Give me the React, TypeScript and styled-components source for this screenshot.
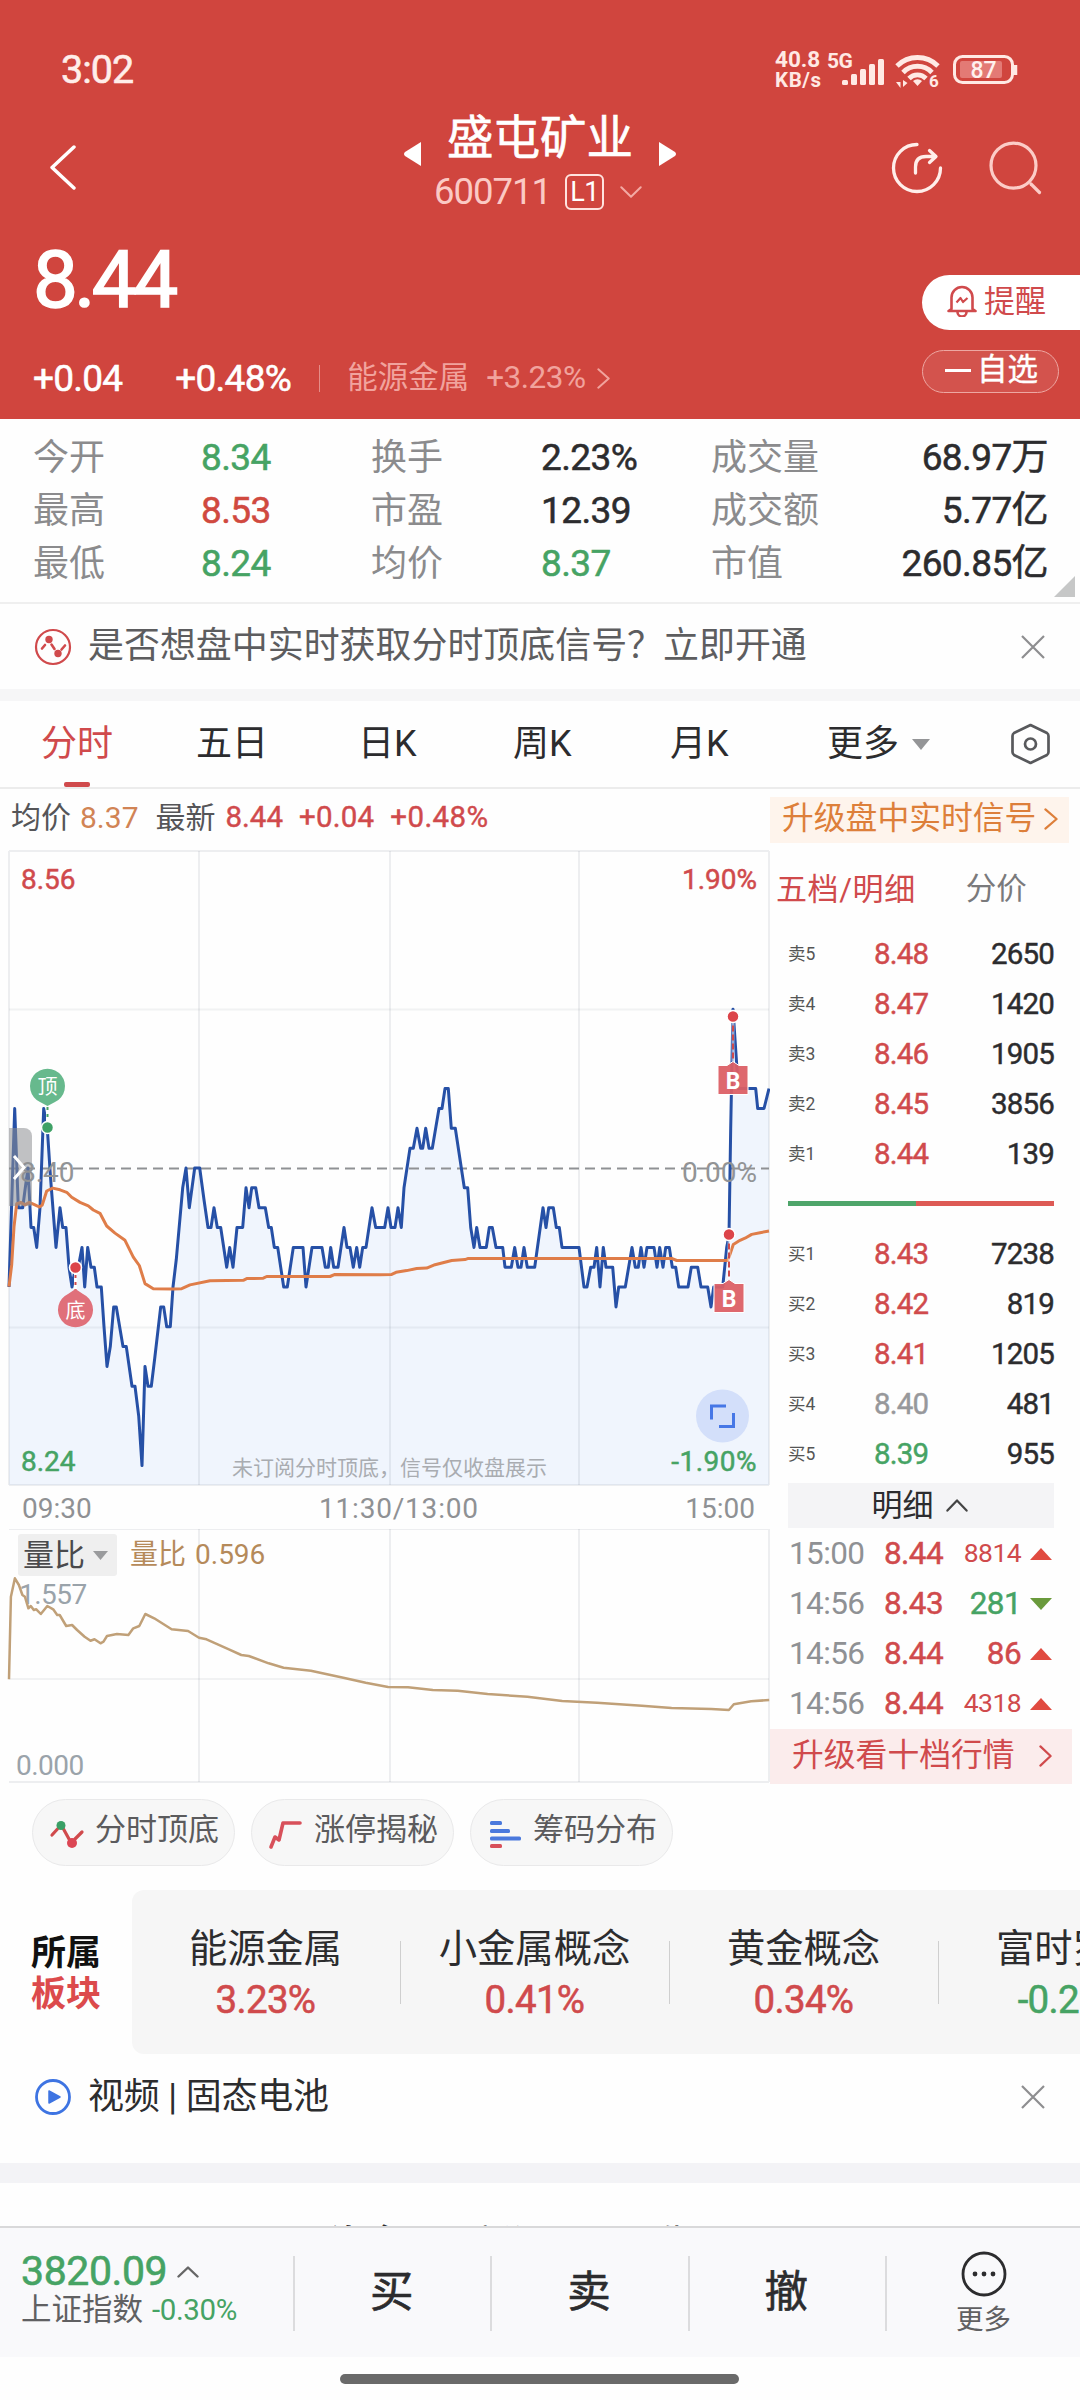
import React from 'react';
import styled, { createGlobalStyle } from 'styled-components';

const RED = '#d04a4c';
const GREEN = '#46a364';
const INK = '#2c2c2e';
const GREY = '#8b8b8d';
const HEADER = '#d0453e';

const Global = createGlobalStyle`
  * { box-sizing: border-box; }
  html, body { margin: 0; padding: 0; }
  body {
    width: 1080px; height: 2400px; overflow: hidden; background: #fefefe;
    font-family: Roboto, "Noto Sans CJK SC", sans-serif;
  }
`;

/* Weight 500 is drawn as regular glyphs with a thin outline: lighter than the Medium cut */
type TProps = { $s: number; $c?: string; $w?: number; $ls?: number };
const T = styled.span<TProps>`
  display: block;
  line-height: 1;
  white-space: nowrap;
  font-size: ${p => p.$s}px;
  color: ${p => p.$c ?? INK};
  font-weight: ${p => (p.$w === 500 ? 400 : p.$w ?? 400)};
  -webkit-text-stroke: ${p => (p.$w === 500 ? (p.$s > 60 ? 1.6 : p.$s / 70) : 0)}px currentColor;
  letter-spacing: ${p => p.$ls ?? 0}px;
`;

const Page = styled.div`
  width: 1080px; height: 2400px; overflow: hidden;
  display: flex; flex-direction: column;
`;

/* header */
const Header = styled.header`
  height: 419px; background: ${HEADER}; color: #fff;
  display: flex; flex-direction: column; flex: none;
`;
const StatusBar = styled.div`
  height: 112px; padding: 28px 60px 0 61px;
  display: flex; align-items: center; justify-content: space-between;
`;
const StatusIcons = styled.div`display: flex; align-items: center;`;
const NetSpeed = styled.div`display: flex; flex-direction: column; width: 50px; margin-top: -2px;`;
const TitleBar = styled.div`
  height: 110px; padding: 0 37px 0 50px;
  display: grid; grid-template-columns: 148px 1fr 150px; align-items: start;
`;
const BackBox = styled.div`padding-top: 33px; height: 80px;`;
const TitleBlock = styled.div`
  display: flex; flex-direction: column; align-items: center; gap: 12px;
`;
const NameRow = styled.div`display: flex; align-items: center; gap: 26px; height: 53px; margin-left: -11px;`;
const Arrow = styled.svg`margin-top: 30px;`;
const CodeRow = styled.div`display: flex; align-items: center; height: 36px; margin: -3px 0 0 -15px;`;
const LevelTag = styled.div`
  width: 39px; height: 36px; border: 2px solid #ffe3df; border-radius: 6px; margin: 0 16px 0 14px;
  display: flex; align-items: center; justify-content: center;
`;
const TitleActions = styled.div`display: flex; gap: 45px; padding-top: 29px; margin-left: -3px;`;
const PriceArea = styled.div`display: flex; justify-content: space-between; flex: 1;`;
const PriceLeft = styled.div`padding: 18px 0 0 33px; display: flex; flex-direction: column; gap: 33px;`;
const ChangeRow = styled.div`display: flex; align-items: center; height: 50px;`;
const VLine = styled.i`width: 1px; height: 27px; background: #e58d88; margin: 0 27px 0 28px;`;
const PriceRight = styled.div`padding-top: 53px; display: flex; flex-direction: column; gap: 20px; width: 158px;`;
const RemindPill = styled.div`
  height: 55px; border-radius: 28px 0 0 28px; background: #fff; padding: 0 0 3px 25px;
  display: flex; align-items: center; gap: 7px;
`;
const SelfPill = styled.div`
  width: 137px; height: 43px; border-radius: 22px; border: 1.5px solid #eda7a2; background: rgba(255,255,255,.08);
  display: flex; align-items: center; padding: 0 0 3px 22px; gap: 6px;
`;
const Dash = styled.i`width: 26px; height: 3px; background: #fff; margin-top: 1px;`;

/* statistics */
const Stats = styled.section`
  height: 185px; flex: none; padding: 12px 32px 0 33px; position: relative;
  border-bottom: 2px solid #efefef;
  display: grid; grid-template-columns: 168px 170px 170px 170px 110px 1fr; grid-auto-rows: 53px; align-items: center;
`;
const StatValue = styled(T)<{ $right?: boolean }>`text-align: ${p => (p.$right ? 'right' : 'left')};`;
const Corner = styled.i`
  position: absolute; right: 5px; bottom: 5px; width: 0; height: 0;
  border-left: 21px solid transparent; border-bottom: 21px solid #c6c7c7;
`;

const Notice = styled.section<{ $h: number; $pb?: number }>`
  height: ${p => p.$h}px; flex: none; padding: 0 34px ${p => p.$pb ?? 0}px 34px;
  display: flex; align-items: center; gap: 16px;
`;
const Spacer = styled.div`flex: 1;`;
const Band = styled.div<{ $h: number; $c: string }>`height: ${p => p.$h}px; background: ${p => p.$c}; flex: none;`;

/* tabs */
const Tabs = styled.nav`
  height: 88px; flex: none; padding: 0 29px 0 41px; border-bottom: 2px solid #ececec;
  display: grid; grid-template-columns: 155px 162px 155px 157px 157px 1fr 41px; align-items: stretch;
`;
const Tab = styled.div<{ $on?: boolean }>`
  display: flex; align-items: center; gap: 13px; position: relative;
  &::after {
    content: ''; display: ${p => (p.$on ? 'block' : 'none')};
    position: absolute; left: 23px; bottom: 0; width: 26px; height: 5px; border-radius: 2px; background: ${RED};
  }
`;

const InfoRow = styled.div`
  height: 61px; flex: none; padding: 0 11px 0 11px; display: flex; align-items: center;
`;
const Upgrade = styled.div`
  width: 299px; height: 46px; background: #fef4ec; display: flex; align-items: center; padding: 0 11px 1px 12px; gap: 8px;
`;
const InfoTexts = styled.div`display: flex; align-items: center; flex: 1; margin-top: -4px;`;

/* main area */
const Main = styled.div`display: flex; height: 934px; flex: none;`;
const Charts = styled.div`width: 770px; flex: none; display: flex; flex-direction: column;`;
const Axis = styled.div`
  height: 42px; padding: 1px 15px 0 22px; display: grid; grid-template-columns: 297px 1fr 100px; align-items: center;
`;
const AxisLabel = styled(T)<{ $end?: boolean }>`text-align: ${p => (p.$end ? 'right' : 'left')};`;
const Volume = styled.div`position: relative; height: 255px;`;
const VolHead = styled.div`position: absolute; left: 18px; top: 5px; display: flex; align-items: center;`;
const VolPick = styled.div`
  width: 99px; height: 42px; background: #efefef; border-radius: 3px; display: flex; align-items: center;
  padding-left: 5px; gap: 8px; margin-right: 13px;
`;

const Side = styled.aside`flex: 1; display: flex; flex-direction: column;`;
const SideTabs = styled.div`
  height: 79px; display: flex; align-items: center; padding-left: 6px; gap: 50px;
`;
const BookRow = styled.div`
  height: 50px; margin: 0 26px 0 18px; padding-top: 2px;
  display: grid; grid-template-columns: 86px 1fr 90px; align-items: center;
`;
const RatioRow = styled.div`height: 50px; margin: 0 26px 0 18px; padding-bottom: 2px; display: flex; align-items: center;`;
const Ratio = styled.i<{ $c: string; $flex: number }>`height: 5px; background: ${p => p.$c}; flex: ${p => p.$flex};`;
const DetailBar = styled.div`
  height: 45px; margin: 4px 26px 0 18px; background: #f4f4f6; display: flex; align-items: center; gap: 12px;
  justify-content: center; padding-right: 3px;
`;
const TradeRow = styled.div`
  height: 50px; margin: 0 28px 0 19px; padding-top: 1px;
  display: grid; grid-template-columns: 95px 1fr 74px 22px; align-items: center;
`;
const TradeNum = styled(T)`text-align: right; padding-right: 9px;`;
const TenLevel = styled.div`
  height: 55px; width: 302px; margin-top: auto; background: #fbecec; display: flex; align-items: center;
  justify-content: space-between; padding: 0 20px 2px 22px;
`;

/* chips and sectors */
const Chips = styled.div`height: 106px; flex: none; padding: 15px 32px 0; display: flex; gap: 16px;`;
const Chip = styled.div`
  width: 203px; height: 67px; border-radius: 34px; background: #f7f7f7; border: 1.5px solid #e9e9ea;
  display: flex; align-items: center; gap: 10px; padding: 0 0 6px 16px;
`;
const Sectors = styled.section`height: 164px; flex: none; display: flex;`;
const SectorTitle = styled.div`
  width: 132px; padding: 3px 0 0 31px; display: flex; flex-direction: column; justify-content: center; gap: 6px;
`;
const SectorList = styled.div`
  flex: none; width: 948px; background: #f6f6f6; border-radius: 12px 0 0 12px; display: flex; overflow: hidden;
`;
const Sector = styled.div`
  width: 269px; flex: none; display: flex; flex-direction: column; align-items: center; gap: 13px;
  padding: 40px 2px 0 0;
  background: linear-gradient(#cfcfcf, #cfcfcf) right 51px / 1px 63px no-repeat;
`;

/* bottom */
const Peek = styled.div`
  height: 43px; flex: none; overflow: hidden; padding: 43px 0 0 330px; display: flex; gap: 74px;
`;
const BottomBar = styled.footer`
  height: 131px; flex: none; background: #f9f9fb; border-top: 2px solid #d9d9da; display: flex;
`;
const IndexBox = styled.div`
  width: 293px; padding: 21px 0 0 21px; display: flex; flex-direction: column; flex: none;
`;
const IndexLine = styled.div<{ $gap: number; $h: number }>`
  display: flex; align-items: center; gap: ${p => p.$gap}px; height: ${p => p.$h}px;
`;
const Action = styled.div`
  width: 197.3px; display: flex; align-items: center; justify-content: center; flex: none;
  background: linear-gradient(#dcdcde, #dcdcde) left 28px / 2px 75px no-repeat;
`;
const MoreAction = styled(Action)`flex-direction: column; gap: 9px; padding-top: 0;`;
const HomeArea = styled.div`flex: 1; display: flex; justify-content: center; padding-top: 17px;`;
const HomeBar = styled.i`width: 399px; height: 10px; border-radius: 5px; background: #6a6a6a; margin-right: 2px;`;

const Chevron = ({ dir, w, h, c, sw = 2.5 }: { dir: 'l' | 'r' | 'u' | 'd'; w: number; h: number; c: string; sw?: number }) => {
  const k = sw / 2 + 0.3;
  const pts = {
    l: `${w - k},${k} ${k},${h / 2} ${w - k},${h - k}`,
    r: `${k},${k} ${w - k},${h / 2} ${k},${h - k}`,
    u: `${k},${h - k} ${w / 2},${k} ${w - k},${h - k}`,
    d: `${k},${k} ${w / 2},${h - k} ${w - k},${k}`,
  }[dir];
  return (
    <svg width={w} height={h} style={{ display: 'block', flex: 'none' }}>
      <polyline points={pts} fill="none" stroke={c} strokeWidth={sw} strokeLinecap="round" strokeLinejoin="round" />
    </svg>
  );
};

const Close = () => (
  <svg width="26" height="26" viewBox="0 0 26 26">
    <path d="M2 2L24 24M24 2L2 24" stroke="#8e8e90" strokeWidth="2.2" fill="none" />
  </svg>
);

const Tri = ({ up, w, h, c }: { up?: boolean; w: number; h: number; c: string }) => (
  <svg width={w} height={h} style={{ display: 'block' }}>
    <polygon points={up ? `0,${h} ${w / 2},0 ${w},${h}` : `0,0 ${w},0 ${w / 2},${h}`} fill={c} />
  </svg>
);

/* ---- intraday series: [x, price level in cents above 8.00] ---- */
const A: [number, number][] = [
  [27, 34], [44, 43], [55, 38], [68, 38], [76, 39], [84, 40], [93, 37], [101, 37], [110, 36], [120, 38], [131, 43],
  [142, 42], [152, 39.4], [168, 36], [180, 38], [188, 37], [198, 37], [207, 35], [216, 34], [226, 35], [235, 35],
  [246, 36], [254, 34], [263, 36], [273, 35], [283, 35], [291, 34], [304, 34], [312, 32], [321, 30], [331, 31],
  [341, 33], [349, 33], [369, 31], [379, 31], [396, 29], [405, 29], [416, 27.5], [426, 25], [435, 30], [444, 29],
  [454, 29], [464, 30.4], [482, 33], [491, 33], [500, 32], [511, 32], [519, 34], [529, 35.4], [548, 39], [558, 40],
  [568, 38], [584, 40], [599, 40], [612, 38.4], [624, 37], [633, 37], [642, 38], [652, 37], [662, 37], [680, 35],
  [689, 36], [699, 35], [711, 37], [728, 37], [738, 39], [747, 38], [755, 39], [767, 39], [777, 38], [796, 38],
  [806, 37], [814, 37], [823, 36], [833, 36], [851, 34], [862, 34], [880, 36], [909, 36], [918, 34], [936, 36],
  [966, 36], [976, 35], [985, 35], [992, 36], [1001, 35], [1014, 35], [1032, 37], [1041, 36], [1050, 36], [1060, 35],
  [1070, 36], [1079, 35], [1088, 36], [1098, 36], [1116, 38], [1127, 37], [1154, 37],
];
const B: [number, number][] = [
  [24, 38], [33, 37], [45, 37], [54, 38], [64, 37], [72, 39], [90, 41], [100, 41], [111, 42], [122, 41], [128, 41],
  [137, 42], [147, 41], [157, 41], [177, 43], [186, 43], [195, 44], [205, 44], [214, 42], [226, 42], [253, 39],
  [263, 39], [272, 37], [282, 36], [290, 37], [300, 36], [319, 36], [328, 37], [337, 37], [348, 36], [368, 36],
  [375, 35], [394, 35], [404, 36], [414, 35], [423, 35], [432, 36], [442, 35], [464, 35], [489, 38], [498, 37],
  [506, 38], [520, 38], [529, 37], [538, 37], [546, 36], [597, 36], [612, 34], [621, 34], [632, 35], [642, 35],
  [650, 36], [660, 34], [670, 36], [678, 35], [698, 35], [708, 33], [716, 34], [736, 34], [756, 36], [766, 35],
  [775, 35], [783, 36], [792, 35], [801, 36], [822, 36], [831, 35], [839, 36], [849, 35], [857, 36], [868, 36],
  [877, 35], [887, 35], [896, 34], [924, 34], [934, 35], [953, 35], [963, 34], [983, 34], [993, 33], [1001, 34],
  [1028, 34], [1040, 36], [1047, 36.6], [1052, 42], [1059, 48], [1075, 44], [1127, 44], [1133, 43], [1152, 43],
  [1167, 44],
];
const py = (v: number) => 318 + (40 - v) * 19.84;
const price = [
  ...A.map(([x, v]) => `${(x / 3).toFixed(1)},${py(v).toFixed(1)}`),
  ...B.map(([x, v]) => `${(380 + x / 3).toFixed(1)},${py(v).toFixed(1)}`),
].join(' ');

const avgA: [number, number][] = [
  [27, 1062], [35, 1010], [42, 920], [50, 865], [62, 862], [75, 868], [88, 862], [105, 868], [118, 873], [127, 868],
  [140, 835], [158, 828], [180, 832], [200, 838], [215, 850], [240, 862], [265, 870], [280, 880], [300, 888],
  [320, 918], [345, 935], [375, 952], [400, 992], [418, 1012], [435, 1055], [460, 1067], [520, 1068], [545, 1067],
  [570, 1058], [630, 1048], [730, 1047], [740, 1043], [790, 1042], [800, 1038], [990, 1038], [1005, 1033],
];
const avgB: [number, number][] = [
  [0, 1034], [35, 1033], [48, 1028], [80, 1024], [110, 1019], [140, 1018], [165, 1010], [215, 1000], [255, 998],
  [265, 995], [875, 995], [890, 1000], [1043, 1000], [1050, 985], [1060, 962], [1080, 952], [1095, 947],
  [1115, 938], [1140, 934], [1167, 930],
];
const avg = [
  ...avgA.map(([x, y]) => `${(x / 3).toFixed(1)},${(y / 2.376 - 10.4).toFixed(1)}`),
  ...avgB.map(([x, y]) => `${(380 + x / 3).toFixed(1)},${(y / 2.376 - 10.4).toFixed(1)}`),
].join(' ');

const ratioPts: [number, number][] = [
  [18, 598], [22, 350], [30, 295], [38, 315], [45, 345], [50, 350], [57, 385], [62, 378], [68, 390], [73, 388],
  [82, 402], [95, 378], [107, 388], [115, 405], [120, 405], [133, 438], [145, 435], [155, 450], [170, 470],
  [182, 482], [190, 478], [202, 490], [208, 485], [215, 468], [235, 462], [258, 465], [268, 445], [280, 438],
  [292, 402], [310, 415], [345, 448], [378, 453], [400, 473], [415, 478], [460, 508], [485, 525], [500, 528],
  [540, 550], [570, 563], [625, 572], [690, 593], [735, 608], [780, 621], [820, 622], [870, 630], [920, 632],
  [980, 642], [1060, 650], [1130, 663], [1200, 668], [1290, 677], [1350, 684], [1430, 687], [1465, 690],
  [1475, 673], [1510, 664], [1546, 660],
];
const ratio = ratioPts.map(([x, y]) => `${(x / 2.01).toFixed(1)},${(y / 3 - 48).toFixed(1)}`).join(' ');

const GridLines = ({ top, bottom, rows, edges = true }: { top: number; bottom: number; rows: number[]; edges?: boolean }) => (
  <g stroke="#5a6478" strokeOpacity=".1" strokeWidth="2" fill="none">
    <path d={`M9 ${top}H769M9 ${bottom}H769${edges ? `M9 ${top}V${bottom}` : ''}M769 ${top}V${bottom}`} />
    {[199, 390, 579].map(x => <path key={x} d={`M${x} ${top}V${bottom}`} />)}
    {rows.map(y => <path key={y} d={`M9 ${y}H769`} strokeOpacity=".08" />)}
  </g>
);

const Signal = ({ x, dot, box }: { x: number; dot: number; box: number }) => (
  <g>
    <path d={`M${x} ${dot}V${box}`} stroke="#fff" strokeWidth="3" strokeOpacity=".5" />
    <path d={`M${x} ${dot}V${box}`} stroke={RED} strokeWidth="2" strokeDasharray="6 3" />
    <circle cx={x} cy={dot} r="6" fill="#dc4449" stroke="#fff" strokeWidth="1.5" />
    <path d={`M${x - 15} ${box + 4}H${x - 6}L${x} ${box}L${x + 6} ${box + 4}H${x + 15}V${box + 33}H${x - 15}Z`}
      fill="#dc5f65" fillOpacity=".94" stroke="#fff" strokeWidth="1" />
    <text x={x} y={box + 27} fontSize="23" fontWeight="700" fill="#fff" textAnchor="middle">B</text>
  </g>
);

const PriceChart = () => (
  <svg width="770" height="637" style={{ display: 'block' }}>
    <polygon points={`9,635 ${price} 769,635`} fill="#f0f5fd" />
    <GridLines top={1} bottom={635} rows={[159.5, 477.5]} />
    <path d="M9 318.5H769" stroke="#8f9194" strokeWidth="2" strokeDasharray="10 6" />
    <polyline points={price} fill="none" stroke="#2650a6" strokeWidth="3" strokeLinejoin="round" />
    <polyline points={avg} fill="none" stroke="#df7d49" strokeWidth="3" strokeLinejoin="round" />
    <g fontSize="28" strokeWidth=".5">
      <text x="21" y="39" fill={RED} stroke={RED}>8.56</text>
      <text x="757" y="39" fill={RED} stroke={RED} textAnchor="end">1.90%</text>
      <text x="20" y="332" fill="#929496">8.40</text>
      <text x="757" y="332" fill="#929496" textAnchor="end">0.00%</text>
      <text x="21" y="621" fill={GREEN} stroke={GREEN}>8.24</text>
      <text x="757" y="621" fill={GREEN} stroke={GREEN} textAnchor="end" letterSpacing=".5">-1.90%</text>
    </g>
    <text x="232" y="624.5" fontSize="21" fill="#a9acb1">未订阅分时顶底，信号仅收盘展示</text>
    <path d="M9 278H24A8 8 0 0 1 32 286V356H9Z" fill="#8c8e92" fillOpacity=".55" />
    <polyline points="14,306 24,317.500 14,329" fill="none" stroke="#fff" strokeWidth="3" />
    <g>
      <path d="M47.500 257V277" stroke="#fff" strokeWidth="3" />
      <path d="M47.500 257V277" stroke={GREEN} strokeWidth="2" strokeDasharray="3 4" />
      <circle cx="47.500" cy="277.500" r="6" fill="#3fa166" stroke="#fff" strokeWidth="1.500" />
      <path d="M40 252L47.500 256L55 252A17.500 17.500 0 1 0 40 252Z" fill="#67b98d" />
      <text x="47.500" y="243.500" fontSize="20" fill="#fff" textAnchor="middle">顶</text>
    </g>
    <g>
      <path d="M75.500 418V441" stroke="#fff" strokeWidth="3" />
      <path d="M75.500 418V441" stroke={RED} strokeWidth="2" strokeDasharray="3 4" />
      <circle cx="75.500" cy="417.5" r="6" fill="#dc4449" stroke="#fff" strokeWidth="1.500" />
      <path d="M68 444L75.500 439L83 444A17.500 17.500 0 1 1 68 444Z" fill="#e0707a" />
      <text x="75.500" y="467.500" fontSize="20" fill="#fff" textAnchor="middle">底</text>
    </g>
    <Signal x={733} dot={166.5} box={211.5} />
    <Signal x={729} dot={384.5} box={429.5} />
    <circle cx="722.500" cy="566" r="26.500" fill="#d3dffa" />
    <path d="M711.500 569.500V556H726M733.500 563V576.500H719" fill="none" stroke="#4677e6" strokeWidth="3" />
  </svg>
);

const SignalCircle = () => (
  <svg width="38" height="38" viewBox="0 0 38 38">
    <circle cx="19" cy="19" r="17" fill="none" stroke={RED} strokeWidth="2.200" />
    <path d="M8 20.500L11 17M17.500 16.500L20.500 21M27.500 21.500L31 17.500" fill="none" stroke={RED} strokeWidth="2.600" strokeLinecap="round" />
    <circle cx="15" cy="11.500" r="3.700" fill={RED} /><circle cx="24" cy="25.500" r="3.700" fill={RED} />
  </svg>
);

const sells = [['卖5', '8.48', '2650'], ['卖4', '8.47', '1420'], ['卖3', '8.46', '1905'], ['卖2', '8.45', '3856'], ['卖1', '8.44', '139']];
const buys = [['买1', '8.43', '7238'], ['买2', '8.42', '819'], ['买3', '8.41', '1205'], ['买4', '8.40', '481', '#97989b'], ['买5', '8.39', '955', GREEN]];
const Book = ({ row }: { row: string[] }) => (
  <BookRow>
    <T $s={17.5} $c="#555">{row[0]}</T>
    <T $s={29.5} $c={row[3] ?? RED} $w={500} $ls={-0.8}>{row[1]}</T>
    <StatValue $s={29.5} $w={500} $ls={-0.8} $right>{row[2]}</StatValue>
  </BookRow>
);
const trades: [string, string, string, boolean, number][] = [
  ['15:00', '8.44', '8814', true, 26.5], ['14:56', '8.43', '281', false, 31.5],
  ['14:56', '8.44', '86', true, 31.5], ['14:56', '8.44', '4318', true, 26.5],
];
const stats: [string, string, string][] = [
  ['今开', '8.34', GREEN], ['换手', '2.23%', INK], ['成交量', '68.97万', INK],
  ['最高', '8.53', '#d0493f'], ['市盈', '12.39', INK], ['成交额', '5.77亿', INK],
  ['最低', '8.24', GREEN], ['均价', '8.37', GREEN], ['市值', '260.85亿', INK],
];
const sectors = [['能源金属', '3.23%', RED], ['小金属概念', '0.41%', RED], ['黄金概念', '0.34%', RED], ['富时罗素', '-0.22%', GREEN]];

export default function App() {
  return (
    <Page>
      <Global />
      <Header>
        <StatusBar>
          <T $s={39.5} $c="#ffeeea" $w={500} $ls={-1}>3:02</T>
          <StatusIcons>
            <NetSpeed>
              <T $s={22.5} $c="#ffe9e4" $w={700}>40.8</T>
              <T $s={20.5} $c="#ffe9e4" $w={700} $ls={0.6}>KB/s</T>
            </NetSpeed>
            <svg width="195" height="42" viewBox="0 0 195 42">
              <g fill="#ffe9e4">
                <text x="2" y="19" fontSize="21" fontWeight="700" letterSpacing="-.5">5G</text>
                <rect x="17" y="31" width="6" height="5" rx="1.500" /><rect x="26" y="25" width="6" height="11" rx="1.500" />
                <rect x="35" y="20" width="6" height="16" rx="1.500" /><rect x="44" y="15" width="6" height="21" rx="1.500" />
                <rect x="53" y="10" width="6" height="26" rx="1.500" />
                <path d="M88 32L92.500 37L97 32A7 7 0 0 0 88 32Z" />
                <text x="104" y="38" fontSize="17" fontWeight="700">6</text>
                <path d="M71 33H75.500V39ZM78 31V38L82.500 34Z" />
              </g>
              <g fill="none" stroke="#ffe9e4" strokeWidth="4.800">
                <path d="M72 17A29 29 0 0 1 113 17" /><path d="M78 23.500A20 20 0 0 1 107 23.500" />
                <path d="M84 29.500A12 12 0 0 1 101 29.500" />
              </g>
              <rect x="129.500" y="7.500" width="58" height="26" rx="8" fill="none" stroke="#ffe9e4" strokeWidth="3" />
              <rect x="135" y="12" width="42" height="17" rx="2" fill="#e37a75" />
              <path d="M190.500 16V26" stroke="#ffe9e4" strokeWidth="3.500" />
              <text x="158.500" y="28.500" fontSize="23" fontWeight="500" fill="#fff1ee" textAnchor="middle">87</text>
            </svg>
          </StatusIcons>
        </StatusBar>
        <TitleBar>
          <BackBox><Chevron dir="l" w={26} h={45} c="#fff" sw={3.5} /></BackBox>
          <TitleBlock>
            <NameRow>
              <Arrow width="17" height="24"><path d="M17 0V24L1 14Q-1 12 1 10Z" fill="#fff" /></Arrow>
              <T $s={46.5} $c="#fff" $w={500}>盛屯矿业</T>
              <Arrow width="17" height="24"><path d="M0 0V24L16 14Q18 12 16 10Z" fill="#fff" /></Arrow>
            </NameRow>
            <CodeRow>
              <T $s={36.5} $c="#fbc9c4" $ls={-1}>600711</T>
              <LevelTag><T $s={27} $c="#fff" $ls={-0.5}>L1</T></LevelTag>
              <Chevron dir="d" w={22} h={12} c="#f3aaa4" sw={2} />
            </CodeRow>
          </TitleBlock>
          <TitleActions>
            <svg width="54" height="54" viewBox="0 0 54 54" fill="none" stroke="#ffeeea" strokeWidth="3.300" strokeLinecap="round" strokeLinejoin="round">
              <path d="M27 3.500A23.500 23.500 0 1 0 50.500 27" />
              <path d="M25.500 32V26Q25.500 15.500 36 15.500H45M39.500 9.500L46 15.500L39.500 21.500" />
            </svg>
            <svg width="54" height="54" viewBox="0 0 54 54" fill="none" stroke="#fcccc7" strokeWidth="3.200" strokeLinecap="round">
              <circle cx="24.500" cy="24.600" r="22.500" /><path d="M42 43L50.500 51.500" />
            </svg>
          </TitleActions>
        </TitleBar>
        <PriceArea>
          <PriceLeft>
            <T $s={80} $c="#fff" $w={500} $ls={-3.6}>8.44</T>
            <ChangeRow>
              <T $s={37} $c="#fff" $w={500} $ls={-0.8}>+0.04</T>
              <T $s={37} $c="#fff" $w={500} $ls={-0.7} style={{ marginLeft: 53 }}>+0.48%</T>
              <VLine />
              <T $s={30.5} $c="#f1a39d">能源金属</T>
              <T $s={31.5} $c="#f1a39d" $ls={-0.5} style={{ margin: '0 11px 0 17px' }}>+3.23%</T>
              <Chevron dir="r" w={13} h={21} c="#f1a39d" sw={2} />
            </ChangeRow>
          </PriceLeft>
          <PriceRight>
            <RemindPill>
              <svg width="30" height="32" viewBox="0 0 30 32" fill="none" stroke={RED} strokeWidth="2.600" strokeLinejoin="round">
                <path d="M4.500 24V12.500A10.500 10.500 0 0 1 25.500 12.500V24L28.500 26H1.500Z" />
                <path d="M9.500 17.500L13.500 13L16 17L20.500 13" strokeWidth="2.200" />
                <path d="M10.500 27A4.500 4.500 0 0 0 19.500 27" />
              </svg>
              <T $s={31} $c={RED}>提醒</T>
            </RemindPill>
            <SelfPill><Dash /><T $s={30.5} $c="#fff" $w={500}>自选</T></SelfPill>
          </PriceRight>
        </PriceArea>
      </Header>

      <Stats>
        {stats.map(([label, value, color], i) => (
          <React.Fragment key={label}>
            <T $s={36} $c={GREY}>{label}</T>
            <StatValue $s={37} $c={color} $w={500} $ls={-0.6} $right={i % 3 === 2}>{value}</StatValue>
          </React.Fragment>
        ))}
        <Corner />
      </Stats>

      <Notice $h={85}>
        <SignalCircle />
        <T $s={35.95} $c="#5d5d5f">是否想盘中实时获取分时顶底信号？立即开通</T>
        <Spacer />
        <Close />
      </Notice>
      <Band $h={12} $c="#f6f6f7" />

      <Tabs>
        <Tab $on><T $s={36} $c={RED}>分时</T></Tab>
        <Tab><T $s={36}>五日</T></Tab>
        <Tab><T $s={36}>日K</T></Tab>
        <Tab><T $s={36}>周K</T></Tab>
        <Tab><T $s={36}>月K</T></Tab>
        <Tab><T $s={36}>更多</T><Tri w={18} h={11} c="#949597" /></Tab>
        <Tab>
          <svg width="41" height="42" viewBox="0 0 41 42" fill="none" stroke="#58595c" strokeWidth="2.700" strokeLinejoin="round">
            <path d="M20.500 2L37 10Q38.500 11 38.500 13V29Q38.500 31 37 32L20.500 40L4 32Q2.500 31 2.500 29V13Q2.500 11 4 10Z" />
            <circle cx="20.500" cy="21" r="5.500" />
          </svg>
        </Tab>
      </Tabs>

      <InfoRow>
        <InfoTexts>
          <T $s={30} $c="#555558">均价</T>
          <T $s={30} $c="#d18455" style={{ margin: '0 17px 0 9px' }}>8.37</T>
          <T $s={30} $c="#555558">最新</T>
          <T $s={29.5} $c={RED} $w={500} style={{ margin: '0 16px 0 10px' }}>8.44</T>
          <T $s={29.5} $c={RED} $w={500} $ls={0.2} style={{ marginRight: 16 }}>+0.04</T>
          <T $s={29.5} $c={RED} $w={500} $ls={0.4}>+0.48%</T>
        </InfoTexts>
        <Upgrade>
          <T $s={31.800} $c="#dd7f3a">升级盘中实时信号</T>
          <Chevron dir="r" w={14} h={22} c="#dd7f3a" sw={2.200} />
        </Upgrade>
      </InfoRow>

      <Main>
        <Charts>
          <PriceChart />
          <Axis>
            <AxisLabel $s={28} $c="#8f9194">09:30</AxisLabel>
            <AxisLabel $s={28} $c="#8f9194" $ls={0.8}>11:30/13:00</AxisLabel>
            <AxisLabel $s={28} $c="#8f9194" $end>15:00</AxisLabel>
          </Axis>
          <Volume>
            <svg width="770" height="255" style={{ display: 'block' }}>
              <g transform="translate(0,-1)">
                <GridLines top={1} bottom={254} rows={[151]} edges={false} />
                <text x="19" y="76" fontSize="28" fill="#9aa3aa" letterSpacing="-.5">1.557</text>
                <text x="16" y="247" fontSize="28" fill="#9aa3aa" letterSpacing="-.5">0.000</text>
                <polyline points={ratio} fill="none" stroke="#c0a078" strokeWidth="2.500" strokeLinejoin="round" />
              </g>
            </svg>
            <VolHead>
              <VolPick><T $s={31} $c="#4a4a4c">量比</T><Tri w={15} h={9} c="#9a9b9d" /></VolPick>
              <T $s={28} $c="#b58a5a">量比</T>
              <T $s={28} $c="#b58a5a" style={{ marginLeft: 9 }}>0.596</T>
            </VolHead>
          </Volume>
        </Charts>

        <Side>
          <SideTabs>
            <T $s={31} $c={RED} $ls={0.6}>五档/明细</T>
            <T $s={30.500} $c="#7a7a7c">分价</T>
          </SideTabs>
          {sells.map(r => <Book key={r[0]} row={r} />)}
          <RatioRow><Ratio $c="#4ea56a" $flex={128} /><Ratio $c="#dd5a55" $flex={138} /></RatioRow>
          {buys.map(r => <Book key={r[0]} row={r} />)}
          <DetailBar><T $s={31}>明细</T><Chevron dir="u" w={22} h={13} c="#444" sw={2.200} /></DetailBar>
          {trades.map(([t, p, n, up, s], i) => (
            <TradeRow key={i}>
              <T $s={31.5} $c="#8f9194" $ls={-0.6}>{t}</T>
              <T $s={31.5} $c={RED} $w={500} $ls={-0.6}>{p}</T>
              <TradeNum $s={s} $c={up ? RED : GREEN} $w={s > 30 ? 500 : 400} $ls={-0.6}>{n}</TradeNum>
              <Tri up={up} w={22} h={12} c={up ? '#e04a40' : '#6a9a3c'} />
            </TradeRow>
          ))}
          <TenLevel><T $s={31.800} $c={RED}>升级看十档行情</T><Chevron dir="r" w={13} h={22} c={RED} sw={2.200} /></TenLevel>
        </Side>
      </Main>

      <Chips>
        <Chip>
          <svg width="36" height="30" viewBox="0 0 36 30" fill="none" stroke={RED} strokeWidth="3.200" strokeLinecap="round" style={{ marginTop: 10 }}>
            <path d="M3 15L8.500 9M14.500 9L20 19M26 19L33 12" />
            <circle cx="12" cy="5.500" r="4.500" fill="#3a9f66" stroke="none" /><circle cx="23" cy="23" r="5" fill="#dc4654" stroke="none" />
          </svg>
          <T $s={31} $c="#5b5b5d">分时顶底</T>
        </Chip>
        <Chip>
          <svg width="36" height="30" viewBox="0 0 36 30" fill="none" stroke="#d8505a" strokeWidth="3.600" strokeLinecap="round" strokeLinejoin="round" style={{ marginTop: 10 }}>
            <path d="M3 27L7 17L11 20L15 3H32" />
          </svg>
          <T $s={31} $c="#5b5b5d">涨停揭秘</T>
        </Chip>
        <Chip>
          <svg width="36" height="30" viewBox="0 0 36 30" style={{ marginTop: 10 }}>
            <g fill="#4a79dd"><rect x="3" y="1" width="12" height="4" rx="1.500" /><rect x="3" y="9" width="20" height="4" rx="1.500" /><rect x="3" y="16.500" width="31" height="4" rx="1.500" /></g>
            <rect x="3" y="24" width="12" height="4" rx="1.500" fill="#d8505a" />
          </svg>
          <T $s={31} $c="#5b5b5d">筹码分布</T>
        </Chip>
      </Chips>

      <Sectors>
        <SectorTitle>
          <T $s={35} $c="#111" $w={700}>所属</T>
          <T $s={35} $c="#dc4a4c" $w={700}>板块</T>
        </SectorTitle>
        <SectorList>
          {sectors.map(([n, p, c]) => (
            <Sector key={n}>
              <T $s={38.300}>{n}</T>
              <T $s={38.500} $c={c} $w={500} $ls={-0.7}>{p}</T>
            </Sector>
          ))}
        </SectorList>
      </Sectors>

      <Notice $h={109} $pb={23}>
        <svg width="38" height="38" viewBox="0 0 38 38">
          <circle cx="19" cy="19" r="16.500" fill="none" stroke="#3e74e2" strokeWidth="2.800" />
          <path d="M15 13L26 19L15 25Z" fill="#3e74e2" stroke="#3e74e2" strokeWidth="1.500" strokeLinejoin="round" />
        </svg>
        <T $s={36} $ls={-0.2}>视频 | 固态电池</T>
        <Spacer />
        <Close />
      </Notice>
      <Band $h={20} $c="#f3f3f6" />
      <Peek>
        <T $s={36} $w={700}>资金</T>
        <T $s={36} $c="#777">新闻</T>
        <T $s={36} $c="#777">公告</T>
      </Peek>

      <BottomBar>
        <IndexBox>
          <IndexLine $gap={10} $h={45}>
            <T $s={41} $c={GREEN} $w={500} $ls={-0.4}>3820.09</T>
            <Chevron dir="u" w={22} h={12} c="#666" sw={2.400} />
          </IndexLine>
          <IndexLine $gap={9} $h={33}>
            <T $s={30.500} $c="#606062">上证指数</T>
            <T $s={29.500} $c={GREEN} $ls={-0.4}>-0.30%</T>
          </IndexLine>
        </IndexBox>
        <Action><T $s={43.500} $w={500}>买</T></Action>
        <Action><T $s={43.500} $w={500}>卖</T></Action>
        <Action><T $s={43.500} $w={500}>撤</T></Action>
        <MoreAction>
          <svg width="46" height="46" viewBox="0 0 46 46">
            <circle cx="23" cy="23" r="21" fill="none" stroke="#2c2c2e" strokeWidth="2.800" />
            <g fill="#2c2c2e"><circle cx="14" cy="23" r="2.400" /><circle cx="23" cy="23" r="2.400" /><circle cx="32" cy="23" r="2.400" /></g>
          </svg>
          <T $s={27.500} $c="#606062">更多</T>
        </MoreAction>
      </BottomBar>
      <HomeArea><HomeBar /></HomeArea>
    </Page>
  );
}
